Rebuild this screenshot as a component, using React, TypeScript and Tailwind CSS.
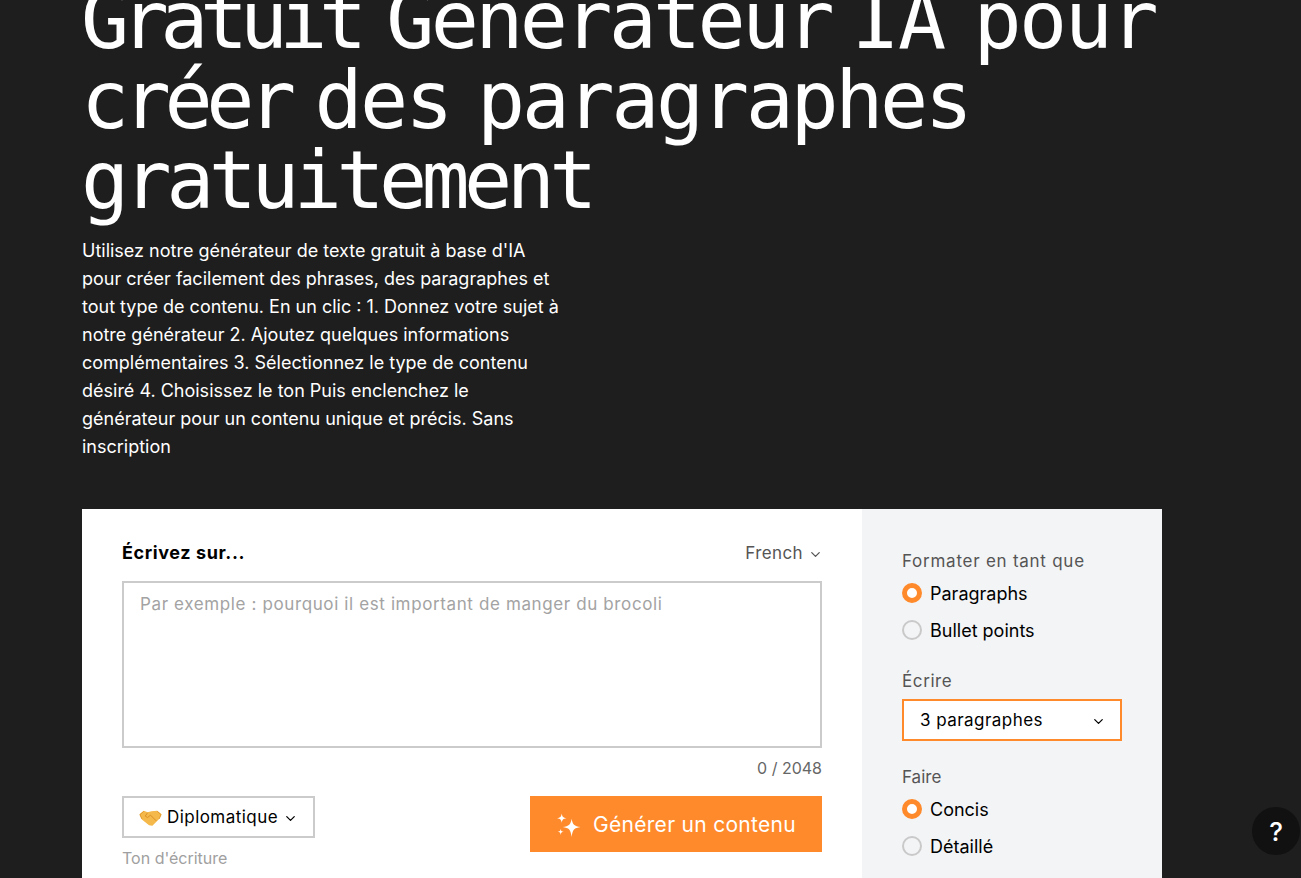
import { ChevronDown } from "lucide-react";

function Radio({ label, on, className = "" }: { label: string; on?: boolean; className?: string }) {
  return (
    <div className={"flex items-center gap-2 h-[24px] " + className}>
      <span className={on ? "w-5 h-5 rounded-full border-[5px] border-[#ff8a2b] bg-white" : "w-5 h-5 rounded-full border-2 border-[#c9c9c9] bg-transparent"} />
      <span className="text-[18px] text-black">{label}</span>
    </div>
  );
}

function Sparkles() {
  return (
    <svg width="25" height="25" viewBox="0 0 24 24" fill="white">
      <path d="M15 5.5 C15.9 11 17.5 12.6 23.5 13.5 C17.5 14.4 15.9 16 15 23 C14.1 16 12.5 14.4 6.5 13.5 C12.5 12.6 14.1 11 15 5.5Z" />
      <path d="M5.5 0.5 C5.9 3.6 6.9 4.6 10 5 C6.9 5.4 5.9 6.4 5.5 9.5 C5.1 6.4 4.1 5.4 1 5 C4.1 4.6 5.1 3.6 5.5 0.5Z" />
      <path d="M4.5 15 C4.8 17.2 5.3 17.7 7.5 18 C5.3 18.3 4.8 18.8 4.5 21 C4.2 18.8 3.7 18.3 1.5 18 C3.7 17.7 4.2 17.2 4.5 15Z" />
    </svg>
  );
}

function Handshake() {
  return (
    <svg width="23" height="18" viewBox="0 0 24 18">
      <path d="M0.5 5 L5 1.5 L9 3 L13 2 L19 1.5 L23.5 5 L21 10 L14 17 L10.5 16.5 L3 10.5Z" fill="#f5b84a" />
      <path d="M9 3.5 L6.5 7 L9 8.5 L12 6 L18 12" fill="none" stroke="#d88f26" strokeWidth="1" />
      <path d="M5 2 L1 5.5 L3 10 M19 2 L23 5.5 L21 10" fill="none" stroke="#e09a2e" strokeWidth="1" />
    </svg>
  );
}

export default function App() {
  return (
    <div className="relative h-[878px] overflow-hidden bg-[#1e1e1e] font-['Inter',sans-serif]">
      <div className="w-[1080px] ml-[82px] -mt-[19px]">
        <h1 className="w-[1120px] text-[80px] leading-[80px] -ml-[1px] text-white font-normal font-['DejaVu_Sans_Mono',monospace] [word-spacing:-14px]">
          <span className="tracking-[-8.5px] [word-spacing:-12px]">Gratuit </span>
          <span className="tracking-[-3.7px] [word-spacing:-24px]">Générateur </span>
          <span className="tracking-[-1.5px] [word-spacing:-18px]">IA </span>
          <span className="tracking-[-2.5px]">pour </span>
          <span className="tracking-[-6.4px] [word-spacing:-17px]">créer </span>
          <span className="tracking-[-2.8px] [word-spacing:-19px]">des </span>
          <span className="tracking-[-3.4px]">paragraphes </span>
          <span className="tracking-[-5.6px]">gratuitement</span>
        </h1>
        <p className="mt-[16px] w-[480px] text-[18px] leading-[28px] text-white">
          Utilisez notre générateur de texte gratuit à base d'IA pour créer facilement des phrases, des paragraphes et tout type de contenu. En un clic : 1. Donnez votre sujet à notre générateur 2. Ajoutez quelques informations complémentaires 3. Sélectionnez le type de contenu désiré 4. Choisissez le ton Puis enclenchez le générateur pour un contenu unique et précis. Sans inscription
        </p>
        <div className="mt-[48px] flex h-[500px]">
          <div className="w-[780px] bg-white px-10 pt-[30px]">
            <div className="flex items-center justify-between h-[28px]">
              <span className="text-[18px] font-bold text-black tracking-[0.6px] pb-[2px]">Écrivez sur...</span>
              <span className="flex items-center gap-[5px] text-[17px] text-[#555] tracking-[0.4px] -mr-px pt-[2px]">
                French <ChevronDown size={15} />
              </span>
            </div>
            <div className="mt-[14px] h-[167px] border-2 border-[#cbcbcb] px-4 py-[8px] text-[17px] leading-[26px] text-[#a3a3a3] tracking-[0.62px]">
              Par exemple : pourquoi il est important de manger du brocoli
            </div>
            <div className="mt-[8px] text-right text-[16px] leading-[24px] text-[#666]">0 / 2048</div>
            <div className="mt-[16px] flex justify-between items-start">
              <div>
                <div className="flex items-center justify-center gap-[5px] w-[193px] h-[42px] pt-[2px] border-2 border-[#cbcbcb] text-[17px] text-black tracking-[0.45px]">
                  <Handshake />
                  <span>Diplomatique</span>
                  <ChevronDown size={15} />
                </div>
                <div className="mt-[9px] text-[16px] leading-[22px] text-[#a0a0a0]">Ton d'écriture</div>
              </div>
              <div className="flex items-center justify-center gap-3 w-[292px] h-[56px] pt-[2px] bg-[#ff8a2b] text-white text-[21px] tracking-[0.3px]">
                <Sparkles />
                <span>Générer un contenu</span>
              </div>
            </div>
          </div>
          <div className="w-[300px] bg-[#f3f4f6] px-10 pt-[40px]">
            <div className="text-[17px] leading-[24px] text-[#555] tracking-[0.75px]">Formater en tant que</div>
            <Radio label="Paragraphs" on className="mt-[8px]" />
            <Radio label="Bullet points" className="mt-[13px]" />
            <div className="mt-[27px] text-[17px] leading-[24px] text-[#555] tracking-[0.6px]">Écrire</div>
            <div className="mt-[6px] flex items-center justify-between h-[42px] pt-[2px] border-2 border-[#ff8a2b] bg-white pl-4 pr-[14px] text-[17px] text-black tracking-[0.45px]">
              3 paragraphes <ChevronDown size={15} />
            </div>
            <div className="mt-[24px] text-[17px] leading-[24px] text-[#555]">Faire</div>
            <Radio label="Concis" on className="mt-[8px]" />
            <Radio label="Détaillé" className="mt-[13px]" />
          </div>
        </div>
      </div>
      <div className="absolute left-[1252px] top-[807px] w-12 h-12 rounded-full bg-[#111] flex items-center justify-center text-white text-[26px] font-medium">?</div>
    </div>
  );
}
